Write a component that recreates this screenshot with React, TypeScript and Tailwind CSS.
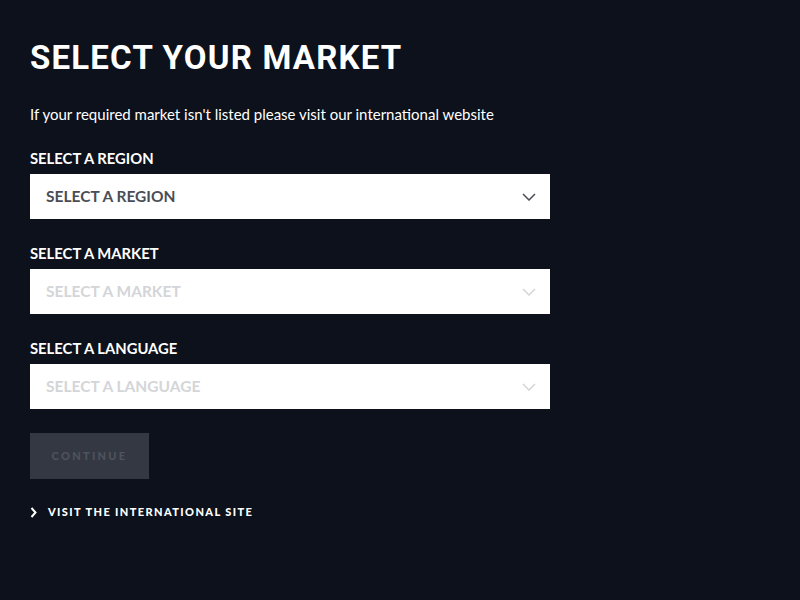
import { useState } from 'react';

const fields = [
  { label: 'SELECT A REGION', placeholder: 'SELECT A REGION', enabled: true },
  { label: 'SELECT A MARKET', placeholder: 'SELECT A MARKET', enabled: false },
  { label: 'SELECT A LANGUAGE', placeholder: 'SELECT A LANGUAGE', enabled: false },
];

function Chevron({ muted }: { muted: boolean }) {
  return (
    <svg width="14" height="8" viewBox="0 0 14 8" fill="none" className={muted ? 'text-[#d4d5d8]' : 'text-[#4a4d55]'}>
      <path d="M1 1l6 6 6-6" stroke="currentColor" strokeWidth="1.5" />
    </svg>
  );
}

export default function App() {
  const [region] = useState('');

  return (
    <div className="h-screen overflow-y-scroll bg-[#0c111b]">
      <div className="min-h-[693px] px-[30px] pt-[40px] font-['Lato','Noto_Sans',sans-serif] text-white">
        {/* Heading */}
        <h1 className="font-['Roboto','Liberation_Sans',sans-serif] text-[33px] font-bold leading-[36px] tracking-[1.2px] text-white">
          SELECT YOUR MARKET
        </h1>
        <p className="mt-[28px] text-[15px] leading-[20px]">
          If your required market isn't listed please visit our international website
        </p>

        {/* Selects */}
        <div className="mt-[25px] flex w-[520px] flex-col gap-[25px]">
          {fields.map((field) => (
            <div key={field.label}>
              <div className="text-[14.8px] font-bold leading-[18px]">{field.label}</div>
              <div className="mt-[7px] flex h-[45px] items-center justify-between bg-white pl-[16px] pr-[14px]">
                <span
                  className={
                    field.enabled
                      ? 'text-[15.5px] font-bold text-[#4a4d55]'
                      : 'text-[15.5px] font-bold text-[#d4d5d8]'
                  }
                >
                  {field.enabled && region ? region : field.placeholder}
                </span>
                <Chevron muted={!field.enabled} />
              </div>
            </div>
          ))}
        </div>

        {/* Continue */}
        <button
          disabled
          className="mt-[24px] flex h-[46px] w-[119px] items-center justify-center bg-[#343842] text-[11px] font-black tracking-[2.3px] text-[#4e535d]"
        >
          CONTINUE
        </button>

        {/* International link */}
        <a href="#" className="mt-[25px] flex items-center gap-[11px] text-[11px] font-black tracking-[1.4px] text-white">
          <svg width="7" height="11" viewBox="0 0 7 11" fill="none">
            <path d="M1.5 1l4 4.5-4 4.5" stroke="currentColor" strokeWidth="2" />
          </svg>
          VISIT THE INTERNATIONAL SITE
        </a>
      </div>
    </div>
  );
}
